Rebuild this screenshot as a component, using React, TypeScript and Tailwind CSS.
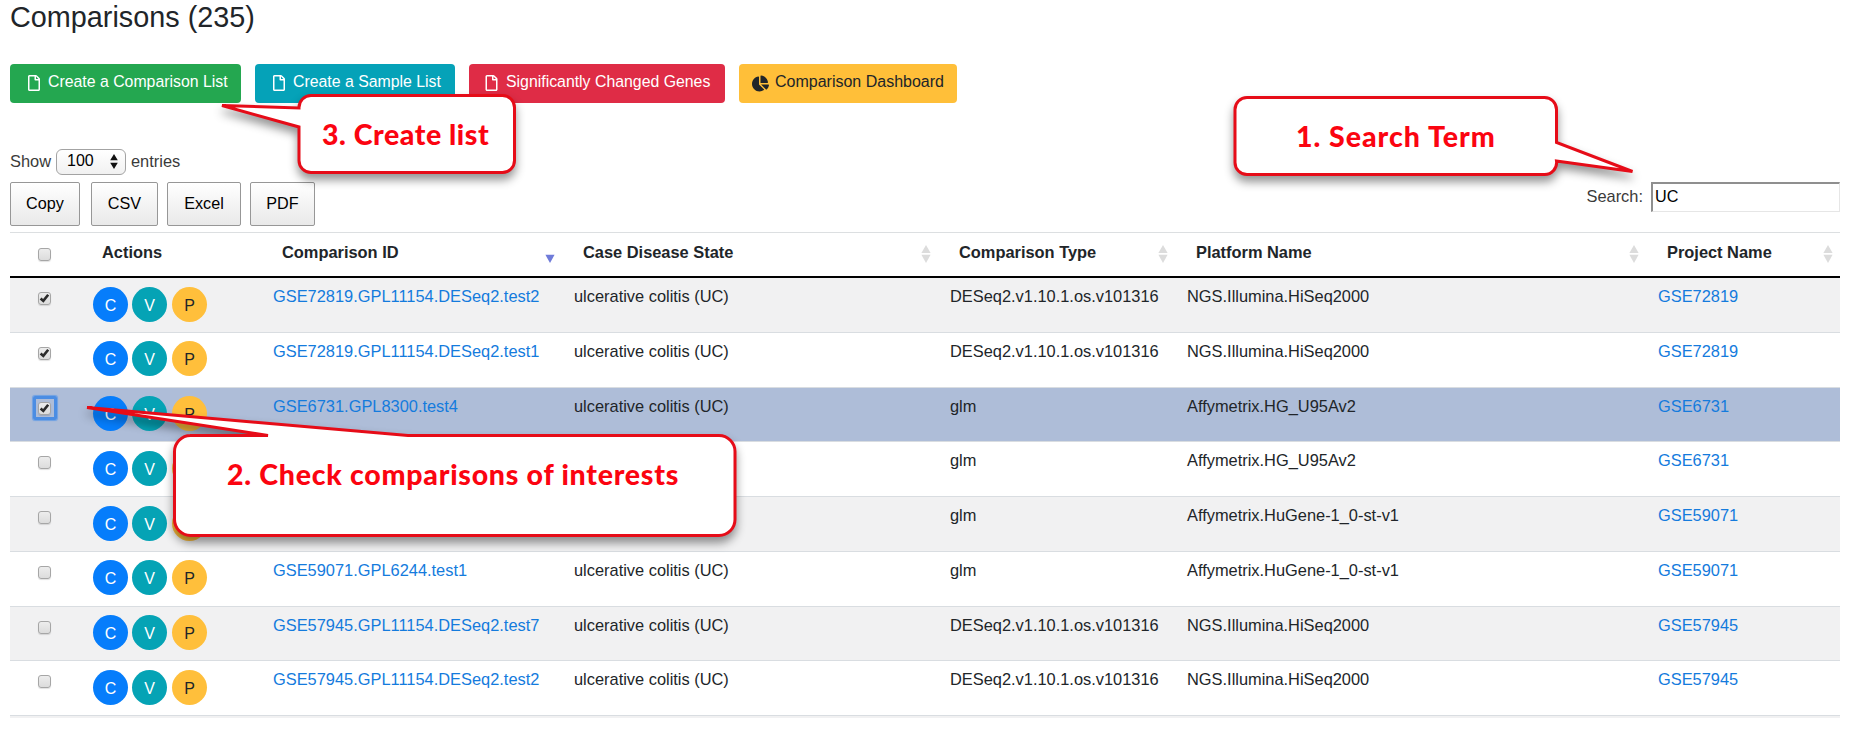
import type { ReactNode } from 'react';
import { FaChartPie, FaRegFile } from 'react-icons/fa';

type Row = {
  id?: string;
  disease?: string;
  type: string;
  platform: string;
  project: string;
  checked?: boolean;
  focused?: boolean;
};

const UC = 'ulcerative colitis (UC)';
const DESEQ = 'DESeq2.v1.10.1.os.v101316';
const HISEQ = 'NGS.Illumina.HiSeq2000';

const rows: Row[] = [
  { id: 'GSE72819.GPL11154.DESeq2.test2', disease: UC, type: DESEQ, platform: HISEQ, project: 'GSE72819', checked: true },
  { id: 'GSE72819.GPL11154.DESeq2.test1', disease: UC, type: DESEQ, platform: HISEQ, project: 'GSE72819', checked: true },
  { id: 'GSE6731.GPL8300.test4', disease: UC, type: 'glm', platform: 'Affymetrix.HG_U95Av2', project: 'GSE6731', checked: true, focused: true },
  { type: 'glm', platform: 'Affymetrix.HG_U95Av2', project: 'GSE6731' },
  { type: 'glm', platform: 'Affymetrix.HuGene-1_0-st-v1', project: 'GSE59071' },
  { id: 'GSE59071.GPL6244.test1', disease: UC, type: 'glm', platform: 'Affymetrix.HuGene-1_0-st-v1', project: 'GSE59071' },
  { id: 'GSE57945.GPL11154.DESeq2.test7', disease: UC, type: DESEQ, platform: HISEQ, project: 'GSE57945' },
  { id: 'GSE57945.GPL11154.DESeq2.test2', disease: UC, type: DESEQ, platform: HISEQ, project: 'GSE57945' },
];

const GRID = 'grid grid-cols-[71px_180px_301px_376px_237px_471px_194px]';

function Checkbox({ checked, focused }: { checked?: boolean; focused?: boolean }) {
  return (
    <span className="relative flex size-[13px] items-center justify-center rounded-[3px] border border-[#a6a6a6] bg-gradient-to-b from-[#ededed] to-[#dcdcdc] shadow-[0_1px_1px_rgba(0,0,0,0.12)]">
      {focused && (
        <span className="absolute -inset-[6.5px] rounded-[2px] border-[3px] border-[#4b8de3] shadow-[0_0_1px_1px_#6da0e4]" />
      )}
      {checked && (
        <svg viewBox="0 0 11 11" className="size-[11px]">
          <path d="M1.6 5.5 4.3 7.9 9.2 1.8" fill="none" stroke="#2b2b2b" strokeWidth="2.6" />
        </svg>
      )}
    </span>
  );
}

function SortIcon({ active }: { active?: boolean }) {
  return (
    <svg viewBox="0 0 10 18" className="mt-[12px] mr-[7px] h-[18px] w-[10px] shrink-0">
      {!active && <path d="M5 0 9.6 8H.4z" fill="#dcdcdc" />}
      <path d="M.4 9.7h9.2L5 17.9z" fill={active ? '#6f7bd9' : '#dcdcdc'} />
    </svg>
  );
}

function HeaderCell({ children, sort }: { children: ReactNode; sort?: 'none' | 'desc' }) {
  return (
    <div className="flex justify-between pl-[21px] font-bold">
      <span className="pt-[7px]">{children}</span>
      {sort && <SortIcon active={sort === 'desc'} />}
    </div>
  );
}

function Action({ children, tone }: { children?: ReactNode; tone: string }) {
  return (
    <span className={`flex size-[35px] items-center justify-center rounded-full pt-[3px] text-[16px] ${tone}`}>{children}</span>
  );
}

function ExportButton({ label, size }: { label: string; size: string }) {
  return (
    <button
      className={`h-[44px] rounded-[2px] border border-[#979797] bg-gradient-to-b from-white to-[#e9e9e9] pb-[2px] text-[16.2px] text-black ${size}`}
    >
      {label}
    </button>
  );
}

function Callout({ box, shape, text, label }: { box: string; shape: string; text: string; label: string }) {
  return (
    <div className={`absolute ${box}`}>
      <svg className="absolute inset-0 size-full overflow-visible drop-shadow-[0_6px_5px_rgba(0,0,0,0.42)]">
        <path d={shape} fill="#fff" stroke="#e60c18" strokeWidth="3" />
      </svg>
      <span className={`absolute font-[Lato,sans-serif] text-[28.5px] leading-[34px] font-black whitespace-nowrap text-[#fb0410] ${text}`}>
        {label}
      </span>
    </div>
  );
}

export default function App() {
  return (
    <main className="relative h-[730px] w-[1854px] overflow-hidden bg-white pr-[14px] pl-[10px] font-['Liberation_Sans',Arial,sans-serif] text-[16.4px] leading-[24px] text-[#212529]">
      <h1 className="h-[64px] text-[28.8px] leading-[34px]">Comparisons (235)</h1>

      <div className="flex h-[85px] items-start text-[15.85px] text-white">
        <button className="mr-[14px] flex h-[38.5px] w-[231px] items-center rounded-[4px] bg-[#24a750] pb-[3px] pl-[18px]">
          <FaRegFile className="mt-[3px] mr-[8px] h-[16px] w-[12px]" />
          Create a Comparison List
        </button>
        <button className="mr-[14px] flex h-[38.5px] w-[200px] items-center rounded-[4px] bg-[#05a2b8] pb-[3px] pl-[18px]">
          <FaRegFile className="mt-[3px] mr-[8px] h-[16px] w-[12px]" />
          Create a Sample List
        </button>
        <button className="mr-[14px] flex h-[38.5px] w-[256px] items-center rounded-[4px] bg-[#df2c46] pb-[3px] pl-[16px]">
          <FaRegFile className="mt-[3px] mr-[8px] h-[16px] w-[13px]" />
          Significantly Changed Genes
        </button>
        <button className="flex h-[38.5px] w-[218px] items-center rounded-[4px] bg-[#ffbf39] pb-[3px] pl-[13px] text-[16px] text-[#212529]">
          <FaChartPie className="mt-[3px] mr-[6px] size-[17px]" />
          Comparison Dashboard
        </button>
      </div>

      <div className="flex h-[33px] items-start text-[#3a3a3a]">
        <span className="w-[46px]">Show</span>
        <span className="mr-[5px] flex h-[26px] w-[70px] items-center justify-between rounded-[6px] border border-[#a3a3a3] bg-gradient-to-b from-white to-[#f1f1f1] pr-[7px] pb-[2px] pl-[10px] text-[16px] text-black">
          100
          <svg viewBox="0 0 8 15" className="h-[15px] w-[8px]">
            <path d="M4 0 7.8 6.2H.2zM4 15 .2 8.8h7.6z" fill="#111" />
          </svg>
        </span>
        <span>entries</span>
      </div>

      <div className="flex h-[50px] items-start">
        <ExportButton label="Copy" size="w-[70px] mr-[11px]" />
        <ExportButton label="CSV" size="w-[67px] mr-[9px]" />
        <ExportButton label="Excel" size="w-[74px] mr-[9px]" />
        <ExportButton label="PDF" size="w-[65px]" />
        <label className="ml-auto flex items-start text-[#3a3a3a]">
          <span className="pt-[2px] pr-[8px]">Search:</span>
          <span className="h-[30px] w-[189px] border-t-2 border-r border-b border-l-2 border-t-[#8f8f8f] border-r-[#e6e6e6] border-b-[#e6e6e6] border-l-[#8f8f8f] pl-[2px] text-[16.2px] leading-[24px] text-black">
            UC
          </span>
        </label>
      </div>

      <section>
        <div className={`${GRID} h-[46px] border-t border-b-2 border-t-[#dcdfe1] border-b-black`}>
          <div className="pt-[15px] pl-[28px]">
            <Checkbox />
          </div>
          <HeaderCell>Actions</HeaderCell>
          <HeaderCell sort="desc">Comparison ID</HeaderCell>
          <HeaderCell sort="none">Case Disease State</HeaderCell>
          <HeaderCell sort="none">Comparison Type</HeaderCell>
          <HeaderCell sort="none">Platform Name</HeaderCell>
          <HeaderCell sort="none">Project Name</HeaderCell>
        </div>
        {rows.map((row, i) => (
          <div
            key={i}
            className={`${GRID} h-[54.75px] border-b border-[#d9dde1] ${
              row.focused ? 'bg-[#aebdd8]' : i % 2 === 0 ? 'bg-[#f1f1f2]' : 'bg-white'
            }`}
          >
            <div className="pt-[14px] pl-[28px]">
              <Checkbox checked={row.checked} focused={row.focused} />
            </div>
            <div className="flex pt-[8.5px] pl-[12px]">
              <Action tone="bg-[#067dfb] text-white mr-[4px]">C</Action>
              <Action tone="bg-[#05a3b5] text-white mr-[5px]">V</Action>
              <Action tone="bg-[#ffbf3b] text-[#212529]">{row.id && 'P'}</Action>
            </div>
            <div className="pt-[6px] pl-[12px] text-[#147bdd]">{row.id}</div>
            <div className="pt-[6px] pl-[12px]">{row.disease}</div>
            <div className="pt-[6px] pl-[12px]">{row.type}</div>
            <div className="pt-[6px] pl-[12px]">{row.platform}</div>
            <div className="pt-[6px] pl-[12px] text-[#147bdd]">{row.project}</div>
          </div>
        ))}
        <div className="h-[2px] bg-[#f1f1f2]" />
      </section>

      <Callout
        box="left-[222px] top-[94px] h-[80px] w-[294px]"
        shape="M89 1.5H280.5A12 12 0 0 1 292.5 13.5V66.5A12 12 0 0 1 280.5 78.5H89A12 12 0 0 1 77 66.5V33L0 11.5 77 14V13.5A12 12 0 0 1 89 1.5Z"
        text="left-[100px] top-[23px] tracking-[0.55px]"
        label="3. Create list"
      />
      <Callout
        box="left-[1233px] top-[96px] h-[80px] w-[400px]"
        shape="M14 1.5H311.5A12 12 0 0 1 323.5 13.5V46.5L399.5 75.5 323.5 65A12 12 0 0 1 311.5 78.5H14A12 12 0 0 1 2 66.5V13.5A12 12 0 0 1 14 1.5Z"
        text="left-[63px] top-[23px] tracking-[1px]"
        label="1. Search Term"
      />
      <Callout
        box="left-[87px] top-[407px] h-[130px] w-[649px]"
        shape="M103 28.5H181L0 .5 321 28.5H632A16 16 0 0 1 648 44.5V112.5A16 16 0 0 1 632 128.5H103.5A16 16 0 0 1 87.5 112.5V44.5A16 16 0 0 1 103.5 28.5Z"
        text="left-[140px] top-[50px] tracking-[0.74px]"
        label="2. Check comparisons of interests"
      />
    </main>
  );
}
